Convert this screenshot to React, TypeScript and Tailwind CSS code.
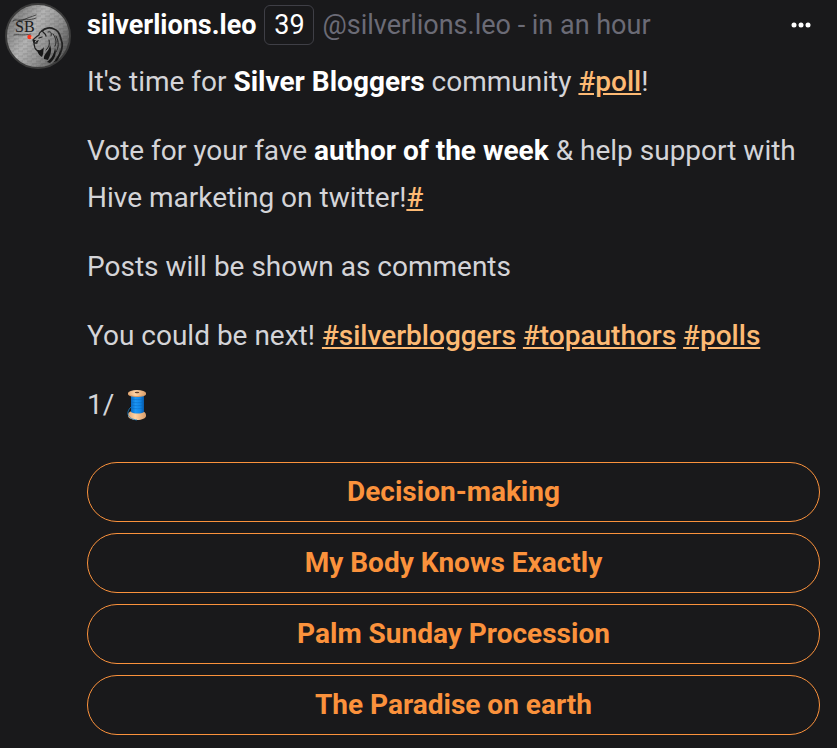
import type { ReactNode } from "react";

const options = [
  "Decision-making",
  "My Body Knows Exactly",
  "Palm Sunday Procession",
  "The Paradise on earth",
];

const Tag = ({ children }: { children: ReactNode }) => (
  <a href="#" className="font-medium text-[#fdba74] underline">
    {children}
  </a>
);

const Strong = ({ children }: { children: ReactNode }) => (
  <strong className="font-bold text-white">{children}</strong>
);

const Avatar = () => (
  <svg viewBox="0 0 66 66" className="h-[66px] w-[66px] shrink-0" role="img" aria-label="silverlions.leo">
    <defs>
      <linearGradient id="metal" x1="0" y1="0.2" x2="1" y2="0.8">
        <stop offset="0" stopColor="#6e6e6e" />
        <stop offset="0.4" stopColor="#b0b0b0" />
        <stop offset="0.65" stopColor="#8e8e8e" />
        <stop offset="1" stopColor="#484848" />
      </linearGradient>
      <pattern id="brushed" width="9" height="5" patternUnits="userSpaceOnUse">
        <path d="M0 1h5M4 3h5" stroke="#333" strokeWidth="0.6" opacity="0.3" />
        <path d="M2 2h6M0 4h4" stroke="#eee" strokeWidth="0.6" opacity="0.2" />
      </pattern>
    </defs>
    <circle cx="33" cy="33" r="32" fill="url(#metal)" stroke="#3c3c3c" strokeWidth="2" />
    <circle cx="33" cy="33" r="31" fill="url(#brushed)" />
    <text x="10" y="29" fontSize="16" fontFamily="Liberation Serif, serif" fill="#1c1c1c">
      SB
    </text>
    <g fill="none" stroke="#222" strokeLinecap="round">
      <path d="M8 18c3-3 6 1 10-1s8-3 13-5M14 17c5-1 10 1 17-2M9 32c5-1 9 1 17-1" strokeWidth="0.7" />
      {/* face profile */}
      <path
        d="M37 28c-2 1-3 2-3 4-2 1-4 3-6 5l1 3 3 0M29 41l1 4c1 2 2 3 4 3M34 35l3-1M38 29c1 1 3 2 3 4"
        strokeWidth="1.3"
      />
      {/* mane */}
      <path d="M37 28c3-3 8-4 12-2 4 1 6 6 7 10 2 5 1 11-1 15l-4 6" strokeWidth="1.8" />
      <path d="M43 29c3-1 4 1 3 4M48 31c3 4 4 8 2 12M51 33c3 6 3 11 0 16M44 37c1 4 0 7-3 10" strokeWidth="1" />
    </g>
    <g fill="#161616">
      <path d="M32 47c2 1 5 0 7-3-1 4 0 6-2 10-2-1-4-3-5-7Z" />
      <path d="M39 56c-1-5 5-7 6-14 2 5 1 9-2 15Z" />
      <path d="M42 59c5-4 7-8 8-14 2 5 0 11-5 15Z" />
      <path d="M47 60c5-3 8-9 8-15 1 5 0 9-3 13Z" />
      <path d="m31 38 3-1-2 3ZM28 37l3 0-2 3Z" />
    </g>
    <circle cx="24.5" cy="34" r="2.2" fill="#ff3018" />
    <circle cx="27" cy="34.5" r="1.2" fill="#f6a080" />
  </svg>
);

const Spool = () => (
  <svg viewBox="0 0 22 32" className="inline-block h-8 w-[22px]" role="img" aria-label="thread">
    <defs>
      <linearGradient id="thread" x1="0" x2="1">
        <stop offset="0" stopColor="#0a6cc4" />
        <stop offset="0.35" stopColor="#1b96f5" />
        <stop offset="0.7" stopColor="#0f86e8" />
        <stop offset="1" stopColor="#0759a8" />
      </linearGradient>
      <linearGradient id="wood" x1="0" x2="1">
        <stop offset="0" stopColor="#e0a673" />
        <stop offset="0.4" stopColor="#ffd3a3" />
        <stop offset="1" stopColor="#d89c69" />
      </linearGradient>
    </defs>
    <path d="M2 26c0-3 3-4 5-4h8c3 0 5 2 5 4v1c0 2-4 4-9 4s-9-2-9-4Z" fill="url(#wood)" />
    <path d="M5 6h13v17c-3 2-10 2-13 0Z" fill="url(#thread)" />
    <path
      d="M5 10c4 1 9 1 13 0M5 13c4 1 9 1 13 0M5 16c4 1 9 1 13 0M5 19c4 1 9 1 13 0"
      fill="none"
      stroke="#0869bc"
      strokeWidth="0.5"
    />
    <path d="M5 18c-6 6-3 12 6 13" fill="none" stroke="#1481ce" strokeWidth="0.8" />
    <path d="M2 4v1c0 2 4 3 9 3s9-1 9-3V4Z" fill="#d99d68" />
    <ellipse cx="11" cy="4" rx="9" ry="3" fill="url(#wood)" />
    <ellipse cx="11" cy="3.5" rx="2.3" ry="0.8" fill="#64412a" />
  </svg>
);

const PostHeader = () => (
  <header className="flex items-center justify-between text-[27px] leading-[42px]">
    <div className="flex items-center gap-2 whitespace-nowrap">
      <span className="font-bold text-white">silverlions.leo</span>
      <span className="flex h-10 w-[50px] items-center justify-center rounded-md border border-[#3f3f46] text-white">
        39
      </span>
      <span className="text-[#6b6b76]">@silverlions.leo - in an hour</span>
    </div>
    <button type="button" aria-label="More" className="mr-[9px] text-white">
      <svg viewBox="0 0 20 6" className="h-1.5 w-5" fill="currentColor">
        <circle cx="3" cy="3" r="2.5" />
        <circle cx="10" cy="3" r="2.5" />
        <circle cx="17" cy="3" r="2.5" />
      </svg>
    </button>
  </header>
);

export default function App() {
  return (
    <main className="min-h-screen bg-[#19191b] font-['Roboto',sans-serif] text-[28px] text-[#d4d4d8]">
      <article className="flex gap-4 pt-[3px] pr-[17px] pb-3 pl-[5px]">
        <Avatar />
        <div className="min-w-0 flex-1 pt-px">
          <PostHeader />
          <div className="mt-3 flex flex-col gap-[22px] leading-[47px]">
            <p>
              It's time for <Strong>Silver Bloggers</Strong> community <Tag>#poll</Tag>!
            </p>
            <p>
              Vote for your fave <Strong>author of the week</Strong> &amp; help support with Hive marketing on
              twitter!<Tag>#</Tag>
            </p>
            <p>Posts will be shown as comments</p>
            <p>
              You could be next! <Tag>#silverbloggers</Tag> <Tag>#topauthors</Tag> <Tag>#polls</Tag>
            </p>
            <p className="flex items-center gap-3">
              1/ <Spool />
            </p>
          </div>
          <div className="mt-[34px] flex flex-col gap-[11px]">
            {options.map((option) => (
              <button
                key={option}
                type="button"
                className="h-[60px] w-full rounded-full border border-[#fb923c] font-bold text-[#fb923c]"
              >
                {option}
              </button>
            ))}
          </div>
        </div>
      </article>
    </main>
  );
}
